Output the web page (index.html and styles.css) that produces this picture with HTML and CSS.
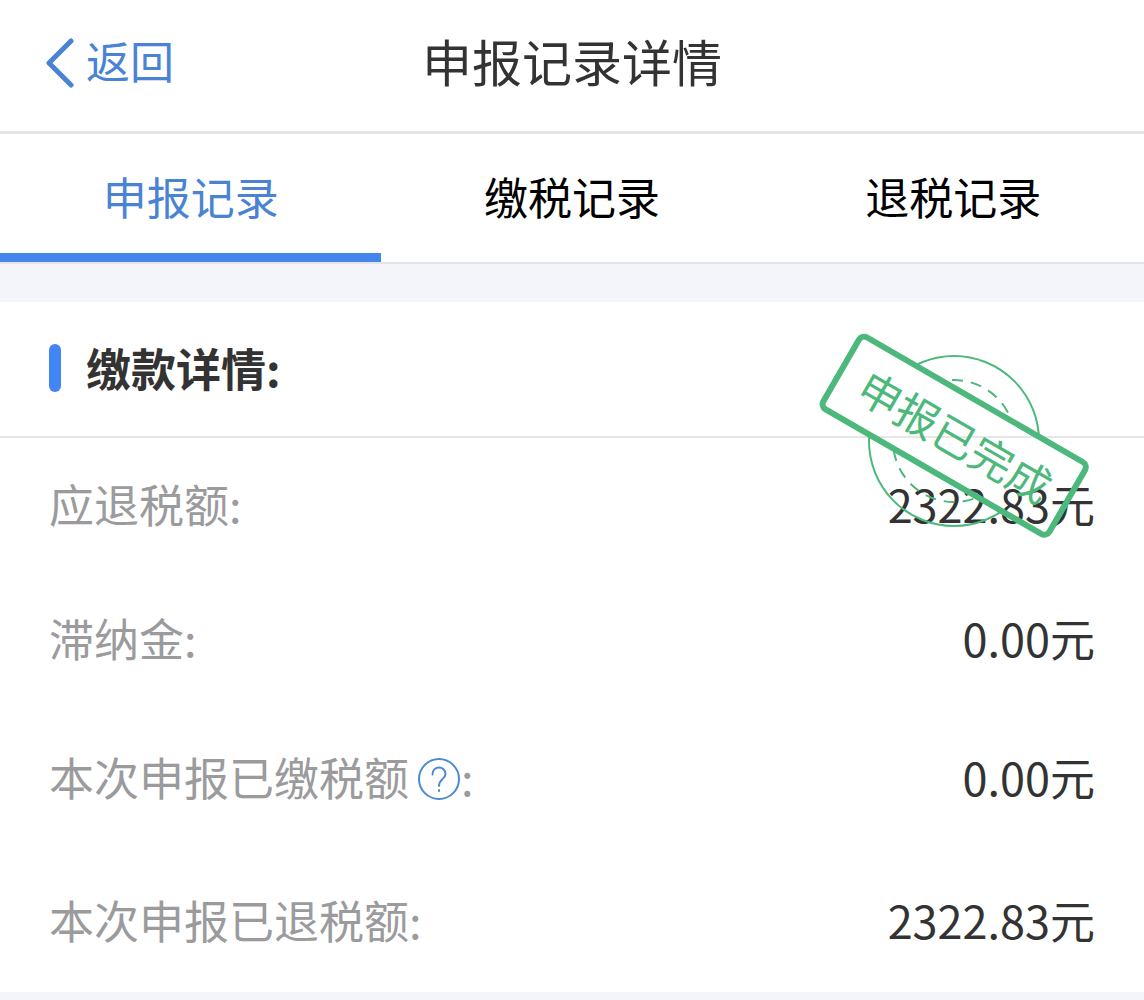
FILE: index.html
```html
<!DOCTYPE html>
<html lang="zh-CN">
<head>
    <meta charset="UTF-8">
    <meta name="viewport" content="width=device-width, initial-scale=1.0">
    <title>申报记录详情</title>
    <link rel="stylesheet" href="styles.css">
</head>
<body>

    <header class="navbar">
        <a class="back" href="#">
            <svg class="back-icon" width="28" height="56" viewBox="0 -6 28 56" aria-hidden="true">
                <path d="M25 3 L3 25 L25 47" />
            </svg>
            返回
        </a>
        <h1>申报记录详情</h1>
    </header>

    <nav class="tabs">
        <a class="tab active" href="#">申报记录</a>
        <a class="tab" href="#">缴税记录</a>
        <a class="tab" href="#">退税记录</a>
    </nav>

    <main class="card">
        <h2 class="card-title">缴款详情:</h2>

        <dl class="rows">
            <div class="row">
                <dt>应退税额:</dt>
                <dd>2322.83元</dd>
            </div>
            <div class="row">
                <dt>滞纳金:</dt>
                <dd>0.00元</dd>
            </div>
            <div class="row tall">
                <dt>
                    本次申报已缴税额
                    <button class="help" type="button" aria-label="说明">
                        <svg width="44" height="44" viewBox="0 0 44 44" aria-hidden="true">
                            <circle cx="22" cy="22" r="20" />
                            <path d="M15.500 17.500 C15.500 8 28.500 8.500 28.500 17 C28.500 22 22 22 22 29" />
                            <path d="M22 33 V34" />
                        </svg>
                    </button>:
                </dt>
                <dd>0.00元</dd>
            </div>
            <div class="row tall">
                <dt>本次申报已退税额:</dt>
                <dd>2322.83元</dd>
            </div>
        </dl>

        <!-- 状态印章 -->
        <svg class="stamp" width="274" height="210" viewBox="17 21 274 210" role="img" aria-label="申报已完成">
            <defs>
                <mask id="outside">
                    <rect x="0" y="0" width="344" height="240" fill="#fff" />
                    <rect x="24" y="84" width="261" height="83" rx="6" transform="rotate(30 154 125)" fill="#000" />
                </mask>
            </defs>
            <g mask="url(#outside)">
                <circle class="stamp-ring" cx="154" cy="131" r="85" />
                <circle class="stamp-dash" cx="154" cy="131" r="61" />
            </g>
            <g transform="rotate(30 154 125)">
                <rect class="stamp-box" x="24" y="84" width="261" height="83" rx="6" />
                <text class="stamp-text" x="156" y="143">申报已完成</text>
            </g>
        </svg>
    </main>

</body>
</html>
```

FILE: styles.css
```css
* {
    box-sizing: border-box;
}

body {
    margin: 0;
    background-color: #f4f5fa;
    color: #333;
    font-family: "Noto Sans CJK SC", sans-serif;
    font-size: 45px;
    line-height: 60px;
}

a {
    color: inherit;
    text-decoration: none;
}

.navbar {
    display: grid;
    grid-template-columns: 1fr auto 1fr;
    align-items: center;
    height: 134px;
    padding: 0 46px 12px;
    background-color: #fff;
    border-bottom: 3px solid #e4e4e4;
}

.navbar h1 {
    margin: 0;
    font-size: 50px;
    font-weight: 400;
}

.back {
    display: flex;
    align-items: center;
    gap: 12px;
    color: #4a83d4;
    font-size: 44px;
}

.back-icon {
    fill: none;
    stroke: #4a83d4;
    stroke-width: 5;
    stroke-linecap: round;
    stroke-linejoin: round;
}

.tabs {
    display: grid;
    grid-template-columns: repeat(3, 1fr);
    background-color: #fff;
    border-bottom: 2px solid #e2e4e8;
}

.tab {
    height: 128px;
    padding-top: 32px;
    border-bottom: 9px solid transparent;
    color: #000;
    font-size: 44px;
    text-align: center;
}

.tab.active {
    color: #4a83d4;
    border-bottom-color: #4486ec;
}

.card {
    position: relative;
    margin-top: 38px;
    background-color: #fff;
}

.card-title {
    display: flex;
    align-items: center;
    gap: 25px;
    height: 136px;
    margin: 0;
    padding: 0 49px 2px;
    border-bottom: 2px solid #e6e6e6;
    font-size: 45px;
    font-weight: 700;
}

.card-title::before {
    content: "";
    width: 12px;
    height: 48px;
    border-radius: 6px;
    background-color: #4285f4;
}

.rows {
    margin: 0;
    padding: 0 49px;
}

.row {
    display: flex;
    align-items: center;
    justify-content: space-between;
    height: 134px;
    padding-bottom: 2px;
}

.row.tall {
    height: 143px;
}

dt {
    display: flex;
    align-items: center;
    color: #9b9b9d;
}

dd {
    margin: 0;
}

.help {
    width: 44px;
    height: 44px;
    margin: 4px 0 0 8px;
    padding: 0;
    border: none;
    background: none;
    cursor: pointer;
}

.help svg {
    display: block;
    fill: none;
    stroke: #4a8ad0;
    stroke-width: 2;
    stroke-linecap: round;
}

.stamp {
    position: absolute;
    top: 29px;
    right: 53px;
    fill: none;
    stroke: #4db87c;
    pointer-events: none;
}

.stamp-box {
    stroke-width: 6;
}

.stamp-ring {
    stroke-width: 2;
}

.stamp-dash {
    stroke-width: 2;
    stroke-dasharray: 11 8;
}

.stamp-text {
    fill: #4db87c;
    stroke: none;
    font-size: 43px;
    text-anchor: middle;
}
```
